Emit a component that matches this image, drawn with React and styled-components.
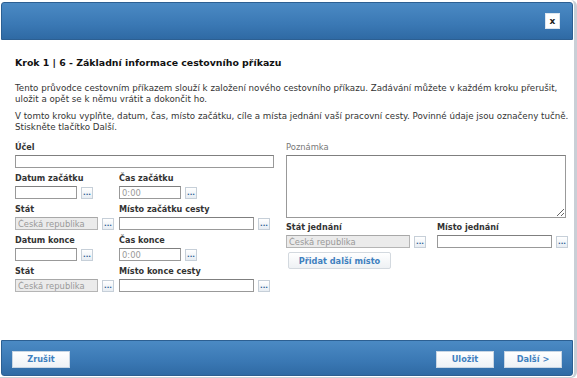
import React from "react";
import styled, { createGlobalStyle } from "styled-components";

const Global = createGlobalStyle`
  html, body { margin: 0; padding: 0; background: #fff; }
  body { font-family: "DejaVu Sans", Verdana, sans-serif; color: #333; }
`;

const Dialog = styled.div`
  width: 577px;
  height: 378px;
  box-sizing: border-box;
  border-right: 3px solid #c9cfd6;
  border-bottom: 1px solid #c9cfd6;
  border-radius: 0 6px 6px 0;
  display: flex;
  flex-direction: column;
  background: #fff;
  overflow: hidden;
`;

const Bar = styled.div`
  margin: ${(p) => (p.$top ? "2px 1px 0 1px" : "0 1px 1px 1px")};
  height: ${(p) => (p.$top ? "38px" : "36px")};
  background: linear-gradient(#4b8ac4, #3a78b4 60%, #2f6aa4);
  border: 1px solid #2c5f92;
  border-radius: ${(p) => (p.$top ? "3px 3px 0 0" : "0 0 3px 3px")};
  display: flex;
  align-items: center;
  padding: ${(p) => (p.$top ? "0 12px 0 10px" : "2px 10px 0 10px")};
  box-sizing: border-box;
`;

const Close = styled.button`
  margin-left: auto;
  width: 15px;
  height: 16px;
  padding: 0;
  border: 1px solid #dde6ef;
  background: #fff;
  font: bold 9px "DejaVu Sans", sans-serif;
  color: #222;
  line-height: 12px;
`;

const Body = styled.div`
  flex: 1;
  padding: 16px 10px 0 15px;
`;

const Title = styled.h1`
  margin: 0 0 14px 0;
  font-size: 9.4px;
  line-height: 13px;
  font-weight: bold;
  color: #111;
  white-space: nowrap;
`;

const Para = styled.p`
  margin: 0 0 6px 0;
  font-size: 8.7px;
  line-height: 11px;
  color: #333;
  white-space: nowrap;
`;

const Columns = styled.div`
  display: flex;
  gap: 12px;
  margin-top: 8px;
`;

const Col = styled.div`
  width: ${(p) => p.$w}px;
  display: flex;
  flex-direction: column;
`;

const Row = styled.div`
  display: flex;
`;

const Field = styled.div`
  display: flex;
  flex-direction: column;
  width: ${(p) => p.$w}px;
  margin-bottom: 4px;
`;

const Label = styled.label`
  font-size: ${(p) => (p.$light ? "8.4px" : "8.1px")};
  font-weight: ${(p) => (p.$light ? "normal" : "bold")};
  color: ${(p) => (p.$light ? "#777" : "#333")};
  height: 12px;
  line-height: 12px;
  margin-bottom: 2px;
  white-space: nowrap;
`;

const InputLine = styled.div`
  display: flex;
  align-items: center;
  gap: 4px;
`;

const Input = styled.input`
  box-sizing: border-box;
  width: ${(p) => p.$w}px;
  height: 13px;
  border: 1px solid ${(p) => (p.disabled ? "#b5b5b5" : "#999")};
  border-top-color: ${(p) => (p.disabled ? "#a8a8a8" : "#7f7f7f")};
  background: ${(p) => (p.disabled ? "#ebebeb" : "#fff")};
  font: 8.4px "DejaVu Sans", sans-serif;
  color: #999;
  padding: 0 2px;
  outline: none;
`;

const Dots = styled.button`
  box-sizing: border-box;
  width: 12px;
  height: 12px;
  padding: 0;
  border: 1px solid #c6cfd8;
  background: linear-gradient(#fff, #e7edf3);
  color: #2b5c93;
  font: bold 7px "DejaVu Sans", sans-serif;
  line-height: 6px;
`;

const Note = styled.textarea`
  box-sizing: border-box;
  width: 280px;
  height: 63px;
  border: 1px solid #999;
  border-top-color: #7f7f7f;
  resize: both;
  margin-bottom: 3px;
`;

const AddBtn = styled.button`
  margin: 0 0 0 2px;
  width: 103px;
  height: 17px;
  border: 1px solid #d3d9df;
  border-radius: 2px;
  background: linear-gradient(#fff, #eef1f4);
  color: #3f80bf;
  font: bold 8.2px "DejaVu Sans", sans-serif;
  padding: 0;
`;

const FooterBtn = styled.button`
  width: 58px;
  height: 17px;
  padding: 0;
  border: 1px solid #c8d6e4;
  background: linear-gradient(#fff, #eef2f6);
  color: #3f80bf;
  font: bold 8.2px "DejaVu Sans", sans-serif;
  margin-left: ${(p) => p.$gap || 0}px;
`;

const Spacer = styled.div`
  flex: ${(p) => (p.$w !== undefined ? `0 0 ${p.$w}px` : "1")};
`;

function Picker({ label, w, value, disabled, light }) {
  return (
    <Field $w={w + 16}>
      <Label $light={light}>{label}</Label>
      <InputLine>
        <Input $w={w} defaultValue={value} disabled={disabled} />
        <Dots>...</Dots>
      </InputLine>
    </Field>
  );
}

export default function App() {
  return (
    <>
      <Global />
      <Dialog>
        <Bar $top>
          <Close>x</Close>
        </Bar>
        <Body>
          <Title>Krok 1 | 6 - Základní informace cestovního příkazu</Title>
          <Para>
            Tento průvodce cestovním příkazem slouží k založení nového cestovního příkazu. Zadávání můžete v každém kroku přerušit,
            <br />
            uložit a opět se k němu vrátit a dokončit ho.
          </Para>
          <Para>
            V tomto kroku vyplňte, datum, čas, místo začátku, cíle a místa jednání vaší pracovní cesty. Povinné údaje jsou označeny tučně.
            <br />
            Stiskněte tlačítko Další.
          </Para>
          <Columns>
            <Col $w={259}>
              <Field $w={259}>
                <Label>Účel</Label>
                <Input $w={259} />
              </Field>
              <Row>
                <Picker label="Datum začátku" w={62} />
                <Spacer $w={26} />
                <Picker label="Čas začátku" w={62} value="0:00" />
              </Row>
              <Row>
                <Picker label="Stát" w={83} value="Česká republika" disabled />
                <Spacer $w={5} />
                <Picker label="Místo začátku cesty" w={135} />
              </Row>
              <Row>
                <Picker label="Datum konce" w={62} />
                <Spacer $w={26} />
                <Picker label="Čas konce" w={62} value="0:00" />
              </Row>
              <Row>
                <Picker label="Stát" w={83} value="Česká republika" disabled />
                <Spacer $w={5} />
                <Picker label="Místo konce cesty" w={135} />
              </Row>
            </Col>
            <Col $w={282}>
              <Label $light>Poznámka</Label>
              <Note />
              <Row>
                <Picker label="Stát jednání" w={124} value="Česká republika" disabled />
                <Spacer $w={11} />
                <Picker label="Místo jednání" w={115} />
              </Row>
              <AddBtn>Přidat další místo</AddBtn>
            </Col>
          </Columns>
        </Body>
        <Bar>
          <FooterBtn>Zrušit</FooterBtn>
          <Spacer />
          <FooterBtn>Uložit</FooterBtn>
          <FooterBtn $gap={10}>Další &gt;</FooterBtn>
        </Bar>
      </Dialog>
    </>
  );
}
